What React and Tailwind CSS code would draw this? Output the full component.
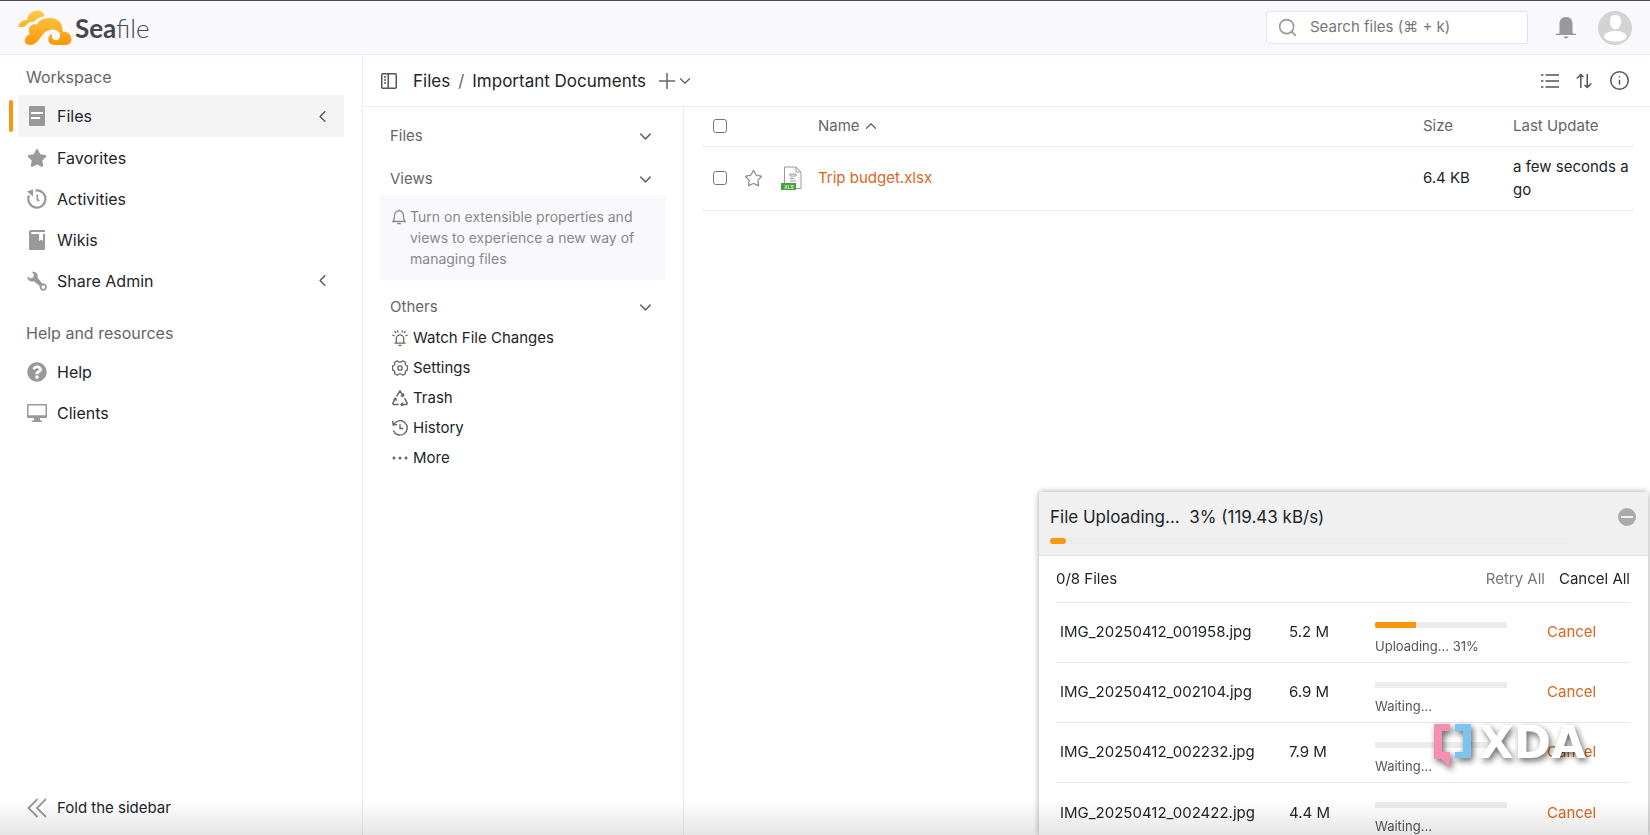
import React from "react";
import { FaStar, FaQuestionCircle } from "react-icons/fa";
import {
  ChevronDown,
  ChevronLeft,
  ChevronUp,
  Plus,
  Search,
  Star,
  Info,
} from "lucide-react";

/* ===================== ICONS ===================== */
const Logo = () => (
  <svg viewBox="0 0 54 36" className="w-[54px] h-9">
    <defs>
      <linearGradient id="cloud" gradientUnits="userSpaceOnUse" x1="0" y1="0" x2="0" y2="36">
        <stop offset="0" stopColor="#fdcb4e" />
        <stop offset="1" stopColor="#fb9708" />
      </linearGradient>
    </defs>
    <path
      fill="url(#cloud)"
      d="M0 16.500C2 11 6 10 9 10 10 4 14 .5 19 .5c4 0 7.500 2.500 7.500 6-4.500.5-8 2-10 5-3.500 0-6.500 1-8 3.500-2.500 2.500-6 2.500-8.500 1.500z"
    />
    <path
      fill="url(#cloud)"
      d="M12 35C8 35 6 32 7 29c1-3 3-4 5-5-2-2.500-1.500-6.500 1-8.500 2-1.500 4-1.500 6-1 2-4.500 7-6.500 13-6.500 8 0 13 5 12.500 13.500C50 21.500 54 25 53.500 30c-.5 4-3.500 5-6.500 5H37c-5 0-7.500-3-6.500-7 .5-2.500 1.500-3.500 3.500-4-1 4 2 7 5 6 4-1.500 4.500-7.500 0-9.500-6-2.500-11.500.5-14.500 4.500-4 5-6.500 10-12.500 10z"
    />
  </svg>
);

const FilesIcon = () => (
  <svg viewBox="0 0 20 20" className="size-5 fill-[#999]">
    <path d="M3 0h14a1 1 0 0 1 1 1v18a1 1 0 0 1-1 1H3a1 1 0 0 1-1-1V1a1 1 0 0 1 1-1z" />
    <path d="M4 6h12v2H4zM4 11h9v2H4z" fill="#fff" />
  </svg>
);

const ActivitiesIcon = () => (
  <svg viewBox="0 0 20 20" className="size-5 fill-none stroke-[#999]" strokeWidth="2.200">
    <path d="M8.500 1.500a8.600 8.600 0 1 1-6.500 5" />
    <path d="M10.300 5.500v5l2 1.500" strokeWidth="1.600" />
    <path d="M0 2.500L6 .5v7z" fill="#999" stroke="none" />
  </svg>
);

const WikiIcon = () => (
  <svg viewBox="0 0 20 20" className="size-5 fill-[#999]">
    <path d="M4 0h14v2H5a1 1 0 0 0 0 2h7v7l2-1.500 2 1.500V4h2v15a1 1 0 0 1-1 1H3a1 1 0 0 1-1-1V2a2 2 0 0 1 2-2z" />
  </svg>
);

const WrenchIcon = () => (
  <svg viewBox="0 0 20 20" className="size-5 fill-[#999]">
    <path
      fillRule="evenodd"
      d="M5 .8c4-.8 6.500 2.200 5.500 5.700l4.700 6A3.700 3.700 0 1 1 12.700 15L7 10.200C3.500 11.200.2 9 .3 5.500l3.200 2 2.800-1 .5-2.700zM16.300 14.300a1.800 1.800 0 1 0 .1 3.600 1.800 1.800 0 0 0-.1-3.600z"
    />
  </svg>
);

const ClientsIcon = () => (
  <svg viewBox="0 0 20 20" className="size-5 fill-[#999]">
    <path
      fillRule="evenodd"
      d="M1 1h18a1 1 0 0 1 1 1v12a1 1 0 0 1-1 1h-6v2l2 1v1H5v-1l2-1v-2H1a1 1 0 0 1-1-1V2a1 1 0 0 1 1-1zm.5 1.500v9.700h17V2.500z"
    />
  </svg>
);

const FoldIcon = () => (
  <svg viewBox="0 0 20 20" className="size-5 fill-none stroke-[#999]" strokeWidth="1.800">
    <path d="M10.500 1L1.500 10l9 9M19 1l-9 9 9 9" />
  </svg>
);

const PanelIcon = () => (
  <svg viewBox="0 0 16 16" className="size-4 fill-none stroke-[#555]" strokeWidth="1.500">
    <rect x=".75" y=".75" width="14.500" height="14.500" rx="1" />
    <path d="M7.200 1v14M3 4h2M3 7h2M3 10h2" />
  </svg>
);

const BellOutlineIcon = () => (
  <svg viewBox="0 0 14 16" className="w-[14px] h-4 shrink-0 fill-none stroke-[#888]" strokeWidth="1.300">
    <path d="M1 12.500c1-1 1.500-2 1.500-5.500C2.500 3.500 4.500 1.800 7 1.800S11.500 3.500 11.500 7c0 3.500.5 4.500 1.500 5.500zM5.200 14.700h3.600M7 .5v1.300" />
  </svg>
);

const WatchIcon = () => (
  <svg viewBox="0 0 16 16" className="size-4 fill-none stroke-[#666]" strokeWidth="1.300">
    <path d="M2.500 13.200h11M4.300 13V8.500a3.700 3.700 0 0 1 7.400 0V13M6.500 15.300h3M.3 5l2.400 1M15.700 5l-2.400 1M2.500 1L4 3.200M5.500.3l.6 2.200M13.500 1L12 3.200M10.500.3l-.6 2.200" />
  </svg>
);

const SettingsIcon = () => (
  <svg viewBox="0 0 16 16" className="size-4 fill-none stroke-[#666]" strokeWidth="1.300" strokeLinejoin="round">
    <path d="M5.300.8C6 2 7 2.200 8 2.200S10 2 10.700.8l2.700 1.500c-.6 1.500-.2 3.200 2 3.700v4c-2.200.5-2.600 2.200-2 3.700l-2.700 1.500C10 14 9 13.800 8 13.800S6 14 5.300 15.200l-2.700-1.500C3.200 12.200 2.800 10.500.6 10V6c2.200-.5 2.600-2.200 2-3.700z" />
    <circle cx="8" cy="8" r="2.200" />
  </svg>
);

const TrashIcon = () => (
  <svg viewBox="0 0 16 16" className="size-4 fill-none stroke-[#666]" strokeWidth="1.500">
    <path d="M4.600 6.300L8 .9l3 5M12.600 8.200l2.700 5.300-.8 1.100H9.500M6.700 14.600H1.500L.7 13.500l2.700-4.800" />
    <path d="M8.700 5.900h2.700V3.200M11 12.800l-1.800 1.800 1.800 1.400M1.600 9.600l2-1.200 1 2.400" />
  </svg>
);

const HistoryIcon = () => (
  <svg viewBox="0 0 16 16" className="size-4 fill-none stroke-[#666]" strokeWidth="1.400">
    <path d="M1.600 4.600A7.200 7.200 0 1 1 1.300 10.500M.7.900l.5 4 4-.3M8 4.200v4.300h3.200" />
  </svg>
);

const MoreIcon = () => (
  <svg viewBox="0 0 16 16" className="size-4 fill-[#666]">
    <circle cx="2" cy="8" r="1.500" />
    <circle cx="8" cy="8" r="1.500" />
    <circle cx="14" cy="8" r="1.500" />
  </svg>
);

const ListIcon = () => (
  <svg viewBox="0 0 18 16" className="w-[18px] h-4 fill-none stroke-[#555]" strokeWidth="1.600">
    <path d="M0 2h2.400M4.500 2H18M0 8h2.400M4.500 8H18M0 14h2.400M4.500 14H18" />
  </svg>
);

const SortIcon = () => (
  <svg viewBox="0 0 16 16" className="size-4 fill-none stroke-[#555]" strokeWidth="1.500">
    <path d="M4.800 15V2M.8 5.500l4-3.900L7.500 4M11.200 1v13M15.200 10.500l-4 3.900L8.500 12" />
  </svg>
);

const BellIcon = () => (
  <svg viewBox="0 0 20 22" className="w-5 h-[22px] fill-[#999]">
    <path d="M10 0c4.500 0 6.500 3 6.500 7v9.200l3.500.8v1H0v-1l3.500-.8V7C3.500 3 5.500 0 10 0zM7.500 19.500h5c-.3 1.300-1.200 2-2.500 2s-2.200-.7-2.500-2z" />
  </svg>
);

const AvatarIcon = () => (
  <svg viewBox="0 0 34 34" className="size-[34px]">
    <circle cx="17" cy="17" r="17" fill="#d3d3d3" />
    <path fill="#fff" d="M17.500 4c4 0 5.500 2.500 5.500 6.500s-2 8-5.500 8-5.500-4-5.500-8S13.500 4 17.500 4zM6 25.500c0-3 4.500-5.500 11.500-5.500s11 2.500 11 5.500-5 5-11 5S6 28.500 6 25.500z" />
  </svg>
);

const XlsIcon = () => (
  <svg viewBox="0 0 22 24" className="w-[22px] h-6">
    <path d="M3.500 1h11.500l5 5v16.500H3.500z" fill="#fff" stroke="#999" />
    <path d="M15 1v5h5" fill="none" stroke="#999" />
    <path d="M9 8h6v2H9zM9 12.500h4M9 15h6" fill="none" stroke="#999" />
    <rect y="17" width="15" height="7" fill="#4aa03c" />
    <text x="3" y="22.500" fontSize="5" fontWeight="700" fill="#d5f0cf" fontFamily="Inter">XLS</text>
  </svg>
);

const MinimizeIcon = () => (
  <svg viewBox="0 0 18 18" className="size-[18px]">
    <circle cx="9" cy="9" r="9" fill="#aaa" />
    <path d="M3 9h12" stroke="#f0f0f0" strokeWidth="2" />
  </svg>
);

/* ===================== HEADER ===================== */
const Header = () => (
  <header className="flex h-[55px] shrink-0 items-center justify-between border-t border-t-[#4a474f] border-b border-b-[#ececf0] bg-[#f9f9fd] pl-[18px] pr-[18px]">
    <a href="#" className="flex items-center gap-[3px]">
      <Logo />
      <span className="font-[Lato,sans-serif] text-[26px] leading-8 text-[#45484f]">
        <b>Sea</b>
        <span className="font-light">file</span>
      </span>
    </a>

    <div className="flex items-center">
      <label className="flex h-[33px] w-[262px] items-center rounded-[3px] border border-[#e3e3ec] bg-white pl-2.5">
        <Search size={21} strokeWidth={1.8} className="text-[#999]" />
        <input
          type="text"
          aria-label="Search files"
          placeholder="Search files (⌘ + k)"
          className="ml-3 w-48 text-[15px] outline-none placeholder:text-[#777]"
        />
      </label>
      <button aria-label="Notifications" className="ml-7">
        <BellIcon />
      </button>
      <button aria-label="Account" className="ml-[22px]">
        <AvatarIcon />
      </button>
    </div>
  </header>
);

/* ===================== SIDEBAR ===================== */
const workspaceItems = [
  { label: "Files", icon: <FilesIcon />, active: true, expandable: true },
  { label: "Favorites", icon: <FaStar size={20} className="text-[#999]" /> },
  { label: "Activities", icon: <ActivitiesIcon /> },
  { label: "Wikis", icon: <WikiIcon /> },
  { label: "Share Admin", icon: <WrenchIcon />, expandable: true },
];

const helpItems = [
  { label: "Help", icon: <FaQuestionCircle size={20} className="text-[#999]" /> },
  { label: "Clients", icon: <ClientsIcon /> },
];

const NavItem = ({ label, icon, active, expandable }) => (
  <li className="flex items-center">
    <span className={active ? "h-8 w-1 rounded-sm bg-[#f8970c]" : "h-8 w-1"} />
    <a
      href="#"
      className={
        active
          ? "ml-[5px] flex h-[42px] flex-1 items-center gap-2.5 bg-[#f4f4f4] pl-[9px] pr-3"
          : "ml-[5px] flex h-[41px] flex-1 items-center gap-2.5 pl-[9px] pr-3"
      }
    >
      {icon}
      <span className="flex-1">{label}</span>
      {expandable && <ChevronLeft size={19} strokeWidth={1.8} className="text-[#555]" />}
    </a>
  </li>
);

const Sidebar = () => (
  <nav className="flex w-[363px] shrink-0 flex-col border-r border-[#ededed] pb-[15px] pl-[9px] pr-[18px] pt-2.5 text-base">
    <h2 className="pl-[17px] leading-6 text-[#666]">Workspace</h2>
    <ul className="mt-[6px]">
      {workspaceItems.map((item) => (
        <NavItem key={item.label} {...item} />
      ))}
    </ul>
    <h2 className="mt-5 pl-[17px] leading-6 text-[#666]">Help and resources</h2>
    <ul className="mt-[6px]">
      {helpItems.map((item) => (
        <NavItem key={item.label} {...item} />
      ))}
    </ul>
    <button className="mt-auto flex items-center gap-2.5 pl-[18px] text-[15px] leading-6">
      <FoldIcon />
      Fold the sidebar
    </button>
  </nav>
);

/* ===================== LIBRARY PANEL ===================== */
const otherItems = [
  { label: "Watch File Changes", icon: <WatchIcon /> },
  { label: "Settings", icon: <SettingsIcon /> },
  { label: "Trash", icon: <TrashIcon /> },
  { label: "History", icon: <HistoryIcon /> },
  { label: "More", icon: <MoreIcon /> },
];

const SectionTitle = ({ children }) => (
  <button className="flex h-8 w-full items-center justify-between pl-2.5 pr-[11px] text-[15px] text-[#666]">
    {children}
    <ChevronDown size={19} strokeWidth={1.8} />
  </button>
);

const LibraryPanel = () => (
  <aside className="w-[321px] shrink-0 border-r border-[#ededed] pl-[17px] pr-[17px] pt-[13px]">
    <SectionTitle>Files</SectionTitle>
    <div className="mt-[11px]">
      <SectionTitle>Views</SectionTitle>
      <div className="flex gap-1 bg-[#f9f9fd] pb-[11px] pl-3 pr-6 pt-[11px] text-sm leading-[21px] text-[#888]">
        <span className="pt-[3px]">
          <BellOutlineIcon />
        </span>
        <p>Turn on extensible properties and views to experience a new way of managing files</p>
      </div>
    </div>
    <div className="mt-[11px]">
      <SectionTitle>Others</SectionTitle>
      <ul>
        {otherItems.map((item) => (
          <li key={item.label}>
            <a href="#" className="flex h-[30px] items-center gap-[5px] pl-3 text-[15px]">
              {item.icon}
              {item.label}
            </a>
          </li>
        ))}
      </ul>
    </div>
  </aside>
);

/* ===================== FILE TABLE ===================== */
const Checkbox = ({ label }) => (
  <input
    type="checkbox"
    aria-label={label}
    className="block size-[14px] appearance-none rounded-[3px] border border-[#777] bg-white"
  />
);

const FileTable = () => (
  <div className="min-w-0 flex-1 pl-[18px] pr-4">
    <table className="w-full table-fixed text-left text-[15px]">
      <thead>
        <tr className="h-[39px] border-b border-[#ededed] text-[#666]">
          <th className="w-[38px] pl-[11px]"><Checkbox label="Select all" /></th>
          <th className="w-[38px]" />
          <th className="w-10" />
          <th className="font-normal">
            <button className="flex items-center gap-[2px]">
              Name <ChevronUp size={18} strokeWidth={1.8} />
            </button>
          </th>
          <th className="w-[90px] font-normal">Size</th>
          <th className="w-[121px] font-normal">Last Update</th>
        </tr>
      </thead>
      <tbody>
        <tr className="h-16 border-b border-[#ededed]">
          <td className="pl-[11px]"><Checkbox label="Select Trip budget.xlsx" /></td>
          <td className="pl-1">
            <button aria-label="Star" className="block">
              <Star size={19} strokeWidth={1.5} className="text-[#888]" />
            </button>
          </td>
          <td className="pl-[3px]"><XlsIcon /></td>
          <td><a href="#" className="text-[#d9661f]">Trip budget.xlsx</a></td>
          <td>6.4 KB</td>
          <td className="break-all leading-[23px]">a few seconds ago</td>
        </tr>
      </tbody>
    </table>
  </div>
);

/* ===================== UPLOAD DIALOG ===================== */
const uploads = [
  { name: "IMG_20250412_001958.jpg", size: "5.2 M", progress: 31 },
  { name: "IMG_20250412_002104.jpg", size: "6.9 M", progress: 0 },
  { name: "IMG_20250412_002232.jpg", size: "7.9 M", progress: 0 },
  { name: "IMG_20250412_002422.jpg", size: "4.4 M", progress: 0 },
];

const UploadDialog = () => (
  <section className="fixed bottom-0 right-[2px] h-[343px] w-[609px] overflow-hidden rounded-t-[3px] bg-white shadow-[0_0_6px_rgba(0,0,0,0.35)]">
    <div className="flex h-16 items-start justify-between border-b border-[#e2e2e2] bg-[#f0f0f0] pl-[11px] pr-3 pt-3">
      <div className="w-[519px]">
        <h3 className="text-[17px] leading-[26px]">File Uploading...&nbsp; 3% (119.43 kB/s)</h3>
        <div className="mt-2 h-[6px] rounded-[3px] bg-[#ececec]">
          <div className="h-full rounded-[3px] bg-[#f8970c]" style={{ width: "3%" }} />
        </div>
      </div>
      <button aria-label="Minimize" className="mt-1">
        <MinimizeIcon />
      </button>
    </div>

    <div className="pl-[17px] pr-[18px] text-[15px]">
      <div className="flex h-[46px] items-center gap-[14px]">
        <span className="flex-1">0/8 Files</span>
        <button className="text-[#777]">Retry All</button>
        <button>Cancel All</button>
      </div>
      <table className="w-full table-fixed">
        <tbody>
          {uploads.map((file) => (
            <tr key={file.name} className="h-[60px] border-t border-[#e6e6e6]">
              <td className="w-[233px] pl-1">{file.name}</td>
              <td className="w-[86px]">{file.size}</td>
              <td className="w-[172px] pt-3">
                <div className="h-[6px] w-[132px] bg-[#ececec]">
                  <div className="h-full rounded-l-[2px] bg-[#f8970c]" style={{ width: `${file.progress}%` }} />
                </div>
                <div className="mt-2 text-[13px] leading-5 text-[#555]">
                  {file.progress ? `Uploading... ${file.progress}%` : "Waiting..."}
                </div>
              </td>
              <td><button className="text-[#d9661f]">Cancel</button></td>
            </tr>
          ))}
        </tbody>
      </table>
    </div>
  </section>
);

/* ===================== WATERMARK ===================== */
const Watermark = () => (
  <svg
    viewBox="0 -12 170 64"
    className="pointer-events-none fixed bottom-[62px] right-[50px] h-16 w-[170px] drop-shadow-[2px_3px_3px_rgba(0,0,0,0.6)]"
  >
    <path d="M4 3h16v7h-8v21h8v16l-9-9H4z" fill="#f48fb1" />
    <path d="M25 3h16v34H25v-6h8V10h-8z" fill="#7cc4ee" />
    <text x="49" y="37" fontSize="45" fontWeight="700" fill="#fff" fontFamily="DejaVu Sans">XDA</text>
  </svg>
);

/* ===================== APP ===================== */
const App = () => (
  <div className="flex h-screen flex-col overflow-hidden bg-white font-[Inter,sans-serif] text-[#212529]">
    <Header />
    <div className="flex min-h-0 flex-1">
      <Sidebar />
      <main className="flex min-w-0 flex-1 flex-col">
        <div className="flex h-[52px] shrink-0 items-center border-b border-[#ededed] pl-[18px] pr-5">
          <button aria-label="Toggle panel"><PanelIcon /></button>
          <div className="ml-4 flex items-center text-[17px] leading-6">
            <a href="#">Files</a>
            <span className="mx-2 text-[#666]">/</span>
            <a href="#">Important Documents</a>
          </div>
          <button aria-label="New" className="ml-2 flex items-center text-[#666]">
            <Plus size={26} strokeWidth={1.4} />
            <ChevronDown size={18} strokeWidth={1.8} className="-ml-1" />
          </button>
          <div className="ml-auto flex items-center gap-[17px] text-[#555]">
            <button aria-label="View"><ListIcon /></button>
            <button aria-label="Sort"><SortIcon /></button>
            <button aria-label="Details"><Info size={21} strokeWidth={1.7} /></button>
          </div>
        </div>
        <div className="flex min-h-0 flex-1">
          <LibraryPanel />
          <FileTable />
        </div>
      </main>
    </div>
    <UploadDialog />
    <Watermark />
    <div className="pointer-events-none fixed inset-x-0 bottom-0 h-9 bg-linear-to-t from-black/10 to-transparent" />
  </div>
);

export default App;
